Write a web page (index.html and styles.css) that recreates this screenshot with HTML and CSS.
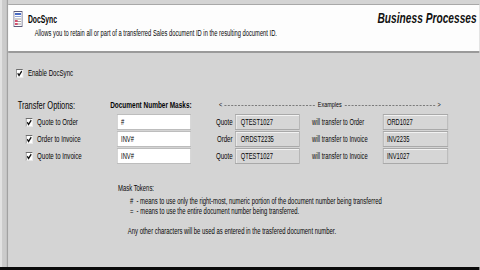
FILE: index.html
```html
<!DOCTYPE html>
<html lang="en">
<head>
    <meta charset="UTF-8">
    <meta name="viewport" content="width=device-width, initial-scale=1.0">
    <title>DocSync - Business Processes</title>
    <link rel="stylesheet" href="styles.css">
</head>
<body>
  <div class="screen">
    <div class="stage">
        <div class="edge"></div>
        <div class="window">
            <div class="header">
                <div class="header-left">
                    <div class="brand">
                        <svg class="logo" viewBox="0 0 15 16" width="15" height="16">
                            <rect x="1.5" y="0.5" width="12" height="15" fill="#fff" stroke="#5a5a7a"/>
                            <rect x="3" y="2" width="9" height="2" fill="#4b6cc4"/>
                            <rect x="3" y="5" width="9" height="1" fill="#8fa3d8"/>
                            <line x1="3" y1="8" x2="12" y2="8" stroke="#8a8a8a"/>
                            <line x1="3" y1="10.5" x2="12" y2="10.5" stroke="#8a8a8a"/>
                            <line x1="3" y1="13" x2="12" y2="13" stroke="#8a8a8a"/>
                            <rect x="3" y="9" width="4" height="2" fill="#d2506e"/>
                            <rect x="3" y="12" width="4" height="2" fill="#d2506e"/>
                        </svg>
                        <span class="brand-name">DocSync</span>
                    </div>
                    <p class="desc">Allows you to retain all or part of a transferred Sales document ID in the resulting document ID.</p>
                </div>
                <div class="section-title">Business Processes</div>
            </div>

            <div class="content">
                <div class="check enable">
                    <span class="box"><svg viewBox="0 0 8 7"><path d="M1 3.2 L3 5.4 L7 1.2"/></svg></span>
                    <span>Enable DocSync</span>
                </div>

                <div class="grid">
                    <div class="col-head opts">Transfer Options:</div>
                    <div class="col-head masks">Document Number Masks:</div>
                    <div class="col-head examples">
                        <span>&lt;</span><span class="dash"></span><span class="ex-label">Examples</span><span class="dash"></span><span>&gt;</span>
                    </div>

                    <div class="check opt">
                        <span class="box"><svg viewBox="0 0 8 7"><path d="M1 3.2 L3 5.4 L7 1.2"/></svg></span>
                        <span>Quote to Order</span>
                    </div>
                    <div class="mask">#</div>
                    <div class="doc">Quote</div>
                    <div class="ro">QTEST1027</div>
                    <div class="will">will transfer to Order</div>
                    <div class="ro result">ORD1027</div>

                    <div class="check opt">
                        <span class="box"><svg viewBox="0 0 8 7"><path d="M1 3.2 L3 5.4 L7 1.2"/></svg></span>
                        <span>Order to Invoice</span>
                    </div>
                    <div class="mask">INV#</div>
                    <div class="doc">Order</div>
                    <div class="ro">ORDST2235</div>
                    <div class="will">will transfer to Invoice</div>
                    <div class="ro result">INV2235</div>

                    <div class="check opt">
                        <span class="box"><svg viewBox="0 0 8 7"><path d="M1 3.2 L3 5.4 L7 1.2"/></svg></span>
                        <span>Quote to Invoice</span>
                    </div>
                    <div class="mask">INV#</div>
                    <div class="doc">Quote</div>
                    <div class="ro">QTEST1027</div>
                    <div class="will">will transfer to Invoice</div>
                    <div class="ro result">INV1027</div>
                </div>

                <div class="tokens">
                    <p class="tokens-title">Mask Tokens:</p>
                    <p class="token first">#  - means to use only the right-most, numeric portion of the document number being transferred</p>
                    <p class="token">=  - means to use the entire document number being transferred.</p>
                    <p class="token-note">Any other characters will be used as entered in the trasfered document number.</p>
                </div>
            </div>
        </div>
        <div class="bottom"></div>
    </div>
  </div>
</body>
</html>
```

FILE: styles.css
```css
body {
    margin: 0;
    background: #d4d4d4;
    font-family: 'Liberation Sans', Arial, sans-serif;
    color: #050505;
}
.screen {
    width: 480px;
    height: 270px;
    overflow: hidden;
}
/* screen is squeezed sideways, so lay out wide and squash */
.stage {
    width: 705px;
    height: 270px;
    display: grid;
    grid-template-columns: 12px 1fr;
    grid-template-rows: 1fr 3px;
    transform: scaleX(0.68);
    transform-origin: 0 0;
}
.edge {
    background: #cbcbcb;
    border-left: 3px solid #e2e2e2;
    border-right: 2px solid #a2a2a2;
}
.window {
    padding-top: 4px;
    background: #d4d4d4;
}
.bottom {
    grid-column: 1 / 3;
    background: #0a0a0a;
}
.header {
    display: flex;
    justify-content: space-between;
    height: 40px;
    padding: 6px 4px 0 7px;
    background: #fdfdfd;
    border-top: 1px solid #a8a8a8;
    border-bottom: 2px solid #9a9a9a;
}
.brand {
    display: flex;
    align-items: center;
    gap: 7px;
    height: 16px;
}
.logo {
    display: block;
}
.brand-name {
    font-size: 10px;
    font-weight: bold;
}
.desc {
    margin: 1px 0 0 32px;
    font-size: 8.5px;
    line-height: 10px;
}
.section-title {
    margin-top: -2px;
    font-size: 15px;
    line-height: 17px;
    font-style: italic;
    font-weight: bold;
    color: #111;
}
.content {
    padding: 15px 0 0 11.5px;
}
.check {
    display: flex;
    align-items: center;
    font-size: 9px;
    line-height: 10px;
}
.box {
    width: 10px;
    height: 9px;
    box-sizing: border-box;
    background: #fff;
    border: 1px solid #6e6e6e;
    border-right-color: #e8e8e8;
    border-bottom-color: #e8e8e8;
    display: flex;
    align-items: center;
    justify-content: center;
}
.box svg {
    width: 8px;
    height: 7px;
}
.box path {
    fill: none;
    stroke: #111;
    stroke-width: 1.7;
}
.enable {
    gap: 7.5px;
}
.grid {
    display: grid;
    grid-template-columns: 146px 109px 65px 95px 122px 96px;
    grid-template-rows: 14px 16px 16px 16px;
    row-gap: 1px;
    margin: 21px 0 0 2.5px;
    align-items: center;
}
.col-head {
    align-self: start;
    line-height: 12px;
}
.opts {
    font-size: 11px;
}
.masks {
    margin-left: -10px;
    font-size: 9.5px;
    font-weight: bold;
    white-space: nowrap;
}
.examples {
    grid-column: 3 / 7;
    display: flex;
    align-items: center;
    gap: 3px;
    margin: 0 11px 0 41px;
    font-size: 8px;
}
.dash {
    flex: 1;
    border-top: 1px dashed #6a6a6a;
}
.ex-label {
    padding: 0 1px;
}
.opt {
    gap: 6.5px;
    padding-left: 12px;
}
.mask {
    height: 16px;
    box-sizing: border-box;
    padding-left: 5px;
    background: #fff;
    border: 1px solid #bdbdbd;
    font-size: 8.5px;
    line-height: 14px;
}
.doc {
    text-align: right;
    padding-right: 4px;
    font-size: 9px;
}
.ro {
    height: 16px;
    box-sizing: border-box;
    padding-left: 7px;
    background: #d6d6d6;
    border: 1px solid #a9a9a9;
    box-shadow: inset 1px 1px 0 #f2f2f2;
    font-size: 8.5px;
    line-height: 14px;
}
.result {
    padding-left: 5px;
}
.will {
    padding-left: 18px;
    font-size: 8.5px;
    white-space: nowrap;
}
.tokens {
    margin: 19px 0 0 150px;
    font-size: 8.7px;
    line-height: 10px;
}
.tokens p {
    margin: 0;
}
.tokens .first {
    margin-top: 3px;
}
.token {
    padding-left: 17.5px;
    white-space: pre;
}
.tokens .token-note {
    margin-top: 10px;
    padding-left: 14.5px;
}
```
